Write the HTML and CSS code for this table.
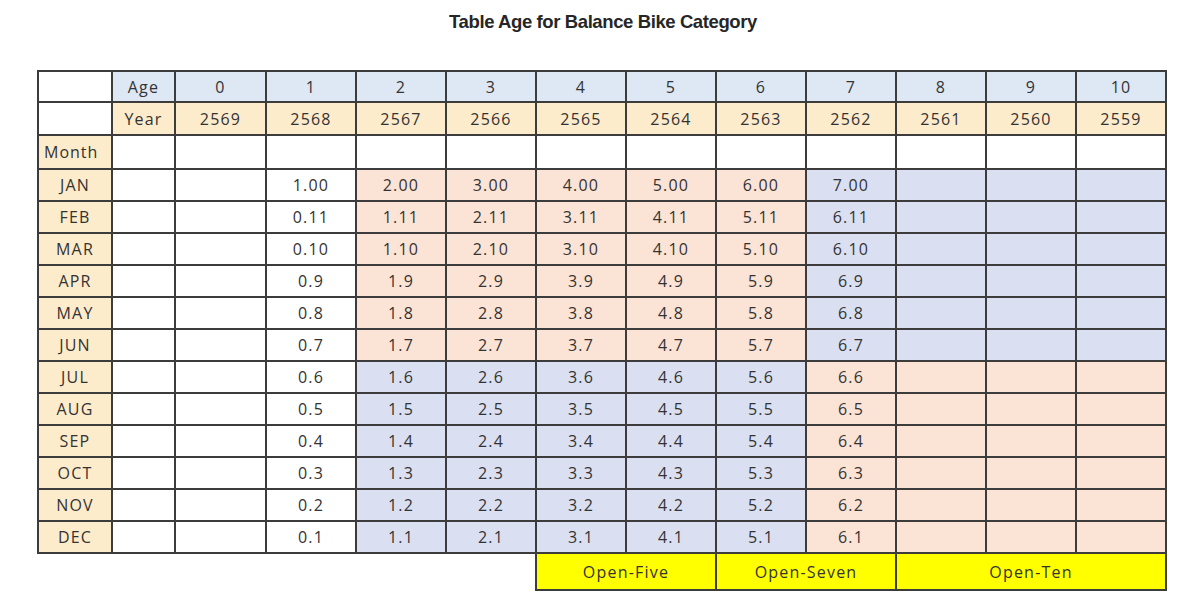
FILE: index.html
```html
<!DOCTYPE html>
<html>
<head>
<meta charset="utf-8">
<link rel="stylesheet" href="styles.css">
</head>
<body>
<div class="page">
  <h1 class="title">Table Age for Balance Bike Category</h1>
  <table class="grid">
    <colgroup>
      <col class="c-month"><col class="c-age"><col class="c-zero">
      <col class="c-n"><col class="c-n"><col class="c-n"><col class="c-n"><col class="c-n">
      <col class="c-n"><col class="c-n"><col class="c-n"><col class="c-n"><col class="c-n">
    </colgroup>
    <tbody>
      <tr class="r-head">
        <td></td><td class="hb">Age</td><td class="hb">0</td><td class="hb">1</td><td class="hb">2</td><td class="hb">3</td><td class="hb">4</td><td class="hb">5</td><td class="hb">6</td><td class="hb">7</td><td class="hb">8</td><td class="hb">9</td><td class="hb">10</td>
      </tr>
      <tr class="r-year">
        <td></td><td class="hy">Year</td><td class="hy">2569</td><td class="hy">2568</td><td class="hy">2567</td><td class="hy">2566</td><td class="hy">2565</td><td class="hy">2564</td><td class="hy">2563</td><td class="hy">2562</td><td class="hy">2561</td><td class="hy">2560</td><td class="hy">2559</td>
      </tr>
      <tr class="r-mhead">
        <td class="hy mo">Month</td><td></td><td></td><td></td><td></td><td></td><td></td><td></td><td></td><td></td><td></td><td></td><td></td>
      </tr>
      <tr><td class="hy">JAN</td><td></td><td></td><td>1.00</td><td class="pk">2.00</td><td class="pk">3.00</td><td class="pk">4.00</td><td class="pk">5.00</td><td class="pk">6.00</td><td class="bl">7.00</td><td class="bl"></td><td class="bl"></td><td class="bl"></td></tr>
      <tr><td class="hy">FEB</td><td></td><td></td><td>0.11</td><td class="pk">1.11</td><td class="pk">2.11</td><td class="pk">3.11</td><td class="pk">4.11</td><td class="pk">5.11</td><td class="bl">6.11</td><td class="bl"></td><td class="bl"></td><td class="bl"></td></tr>
      <tr><td class="hy">MAR</td><td></td><td></td><td>0.10</td><td class="pk">1.10</td><td class="pk">2.10</td><td class="pk">3.10</td><td class="pk">4.10</td><td class="pk">5.10</td><td class="bl">6.10</td><td class="bl"></td><td class="bl"></td><td class="bl"></td></tr>
      <tr><td class="hy">APR</td><td></td><td></td><td>0.9</td><td class="pk">1.9</td><td class="pk">2.9</td><td class="pk">3.9</td><td class="pk">4.9</td><td class="pk">5.9</td><td class="bl">6.9</td><td class="bl"></td><td class="bl"></td><td class="bl"></td></tr>
      <tr><td class="hy">MAY</td><td></td><td></td><td>0.8</td><td class="pk">1.8</td><td class="pk">2.8</td><td class="pk">3.8</td><td class="pk">4.8</td><td class="pk">5.8</td><td class="bl">6.8</td><td class="bl"></td><td class="bl"></td><td class="bl"></td></tr>
      <tr><td class="hy">JUN</td><td></td><td></td><td>0.7</td><td class="pk">1.7</td><td class="pk">2.7</td><td class="pk">3.7</td><td class="pk">4.7</td><td class="pk">5.7</td><td class="bl">6.7</td><td class="bl"></td><td class="bl"></td><td class="bl"></td></tr>
      <tr><td class="hy">JUL</td><td></td><td></td><td>0.6</td><td class="bl">1.6</td><td class="bl">2.6</td><td class="bl">3.6</td><td class="bl">4.6</td><td class="bl">5.6</td><td class="pk">6.6</td><td class="pk"></td><td class="pk"></td><td class="pk"></td></tr>
      <tr><td class="hy">AUG</td><td></td><td></td><td>0.5</td><td class="bl">1.5</td><td class="bl">2.5</td><td class="bl">3.5</td><td class="bl">4.5</td><td class="bl">5.5</td><td class="pk">6.5</td><td class="pk"></td><td class="pk"></td><td class="pk"></td></tr>
      <tr><td class="hy">SEP</td><td></td><td></td><td>0.4</td><td class="bl">1.4</td><td class="bl">2.4</td><td class="bl">3.4</td><td class="bl">4.4</td><td class="bl">5.4</td><td class="pk">6.4</td><td class="pk"></td><td class="pk"></td><td class="pk"></td></tr>
      <tr><td class="hy">OCT</td><td></td><td></td><td>0.3</td><td class="bl">1.3</td><td class="bl">2.3</td><td class="bl">3.3</td><td class="bl">4.3</td><td class="bl">5.3</td><td class="pk">6.3</td><td class="pk"></td><td class="pk"></td><td class="pk"></td></tr>
      <tr><td class="hy">NOV</td><td></td><td></td><td>0.2</td><td class="bl">1.2</td><td class="bl">2.2</td><td class="bl">3.2</td><td class="bl">4.2</td><td class="bl">5.2</td><td class="pk">6.2</td><td class="pk"></td><td class="pk"></td><td class="pk"></td></tr>
      <tr><td class="hy">DEC</td><td></td><td></td><td>0.1</td><td class="bl">1.1</td><td class="bl">2.1</td><td class="bl">3.1</td><td class="bl">4.1</td><td class="bl">5.1</td><td class="pk">6.1</td><td class="pk"></td><td class="pk"></td><td class="pk"></td></tr>
      <tr class="r-open">
        <td class="none" colspan="6"></td>
        <td class="yl" colspan="2">Open-Five</td>
        <td class="yl" colspan="2">Open-Seven</td>
        <td class="yl" colspan="3">Open-Ten</td>
      </tr>
    </tbody>
  </table>
</div>
</body>
</html>
```

FILE: styles.css
```css
html, body {
  margin: 0;
  padding: 0;
  background: #ffffff;
}

.page {
  width: 1200px;
  height: 596px;
  overflow: hidden;
}

.title {
  margin: 0;
  padding-top: 12px;
  height: 20px;
  line-height: 20px;
  text-align: center;
  font-family: "Liberation Sans", Arial, sans-serif;
  font-weight: bold;
  font-size: 18.5px;
  letter-spacing: -0.4px;
  color: #262626;
  padding-left: 6px;
}

.grid {
  margin: 38px 0 0 37px;
  border-collapse: collapse;
  table-layout: fixed;
  width: 1128px;
  font-family: "Open Sans", "Noto Sans", sans-serif;
  font-size: 16px;
  letter-spacing: 1.2px;
  color: #333333;
}

.c-month { width: 74px; }
.c-age { width: 63px; }
.c-zero { width: 91px; }
.c-n { width: 90px; }

.grid td {
  border: 2px solid #3c3c3c;
  text-align: center;
  padding: 0;
  height: 30px;
  line-height: 28px;
  background: #ffffff;
}

.grid .r-head td { height: 29px; }
.grid .r-year td { height: 31px; }
.grid .r-mhead td { height: 32px; }

.grid .mo { text-align: left; padding-left: 5px; letter-spacing: 1px; }

.grid .hb { background: #dde8f4; }
.grid .hy { background: #fdeccb; }
.grid .pk { background: #fbe3d6; }
.grid .bl { background: #dae0f1; }
.grid .yl { background: #ffff00; height: 35px; }

.grid td.none {
  border: none;
  border-top: 2px solid #3c3c3c;
  background: transparent;
}
```
